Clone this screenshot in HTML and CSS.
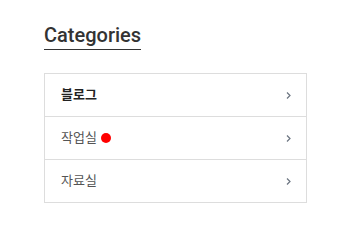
FILE: index.html
```html
<!DOCTYPE html>
<html lang="ko">
<head>
    <meta charset="UTF-8">
    <meta name="viewport" content="width=device-width, initial-scale=1.0">
    <title>Categories</title>
    <link rel="stylesheet" href="styles.css">
</head>
<body>
    <div class="widget">
        <h2 class="widget-title">Categories</h2>
        <ul class="category-list">
            <li class="category-item active">
                <span class="category-name">블로그</span>
                <svg class="chevron" width="5" height="7" viewBox="0 0 5 7"><polyline points="1,0.5 4,3.5 1,6.5" fill="none" stroke="#6b7480" stroke-width="1.2"/></svg>
            </li>
            <li class="category-item">
                <span class="category-name">작업실<span class="new-dot"></span></span>
                <svg class="chevron" width="5" height="7" viewBox="0 0 5 7"><polyline points="1,0.5 4,3.5 1,6.5" fill="none" stroke="#6b7480" stroke-width="1.2"/></svg>
            </li>
            <li class="category-item">
                <span class="category-name">자료실</span>
                <svg class="chevron" width="5" height="7" viewBox="0 0 5 7"><polyline points="1,0.5 4,3.5 1,6.5" fill="none" stroke="#6b7480" stroke-width="1.2"/></svg>
            </li>
        </ul>
    </div>
</body>
</html>
```

FILE: styles.css
```css
body {
    margin: 0;
    padding: 0;
    background-color: #ffffff;
    font-family: "Noto Sans CJK KR", "Noto Sans", sans-serif;
}

.widget {
    width: 263px;
    padding: 23px 0 0 44px;
}

.widget-title {
    display: inline-block;
    margin: 0 0 23px 0;
    padding-bottom: 2px;
    font-family: Roboto, "Noto Sans", sans-serif;
    font-size: 20px;
    font-weight: 500;
    line-height: 23px;
    color: #333333;
    border-bottom: 1px solid #333333;
}

.category-list {
    list-style: none;
    margin: 0;
    padding: 0;
    border: 1px solid #dddddd;
}

.category-item {
    display: flex;
    align-items: center;
    justify-content: space-between;
    height: 42px;
    padding: 0 15px 0 16px;
    border-bottom: 1px solid #dddddd;
}

.category-item:last-child {
    border-bottom: none;
}

.category-name {
    display: flex;
    align-items: center;
    padding-bottom: 3px;
    font-size: 13px;
    color: #555555;
}

.category-item.active .category-name {
    font-weight: bold;
    color: #222222;
}

.new-dot {
    display: inline-block;
    width: 10px;
    height: 10px;
    margin: 3px 0 0 4px;
    border-radius: 50%;
    background-color: #ff0000;
}

.chevron {
    display: block;
}
```
